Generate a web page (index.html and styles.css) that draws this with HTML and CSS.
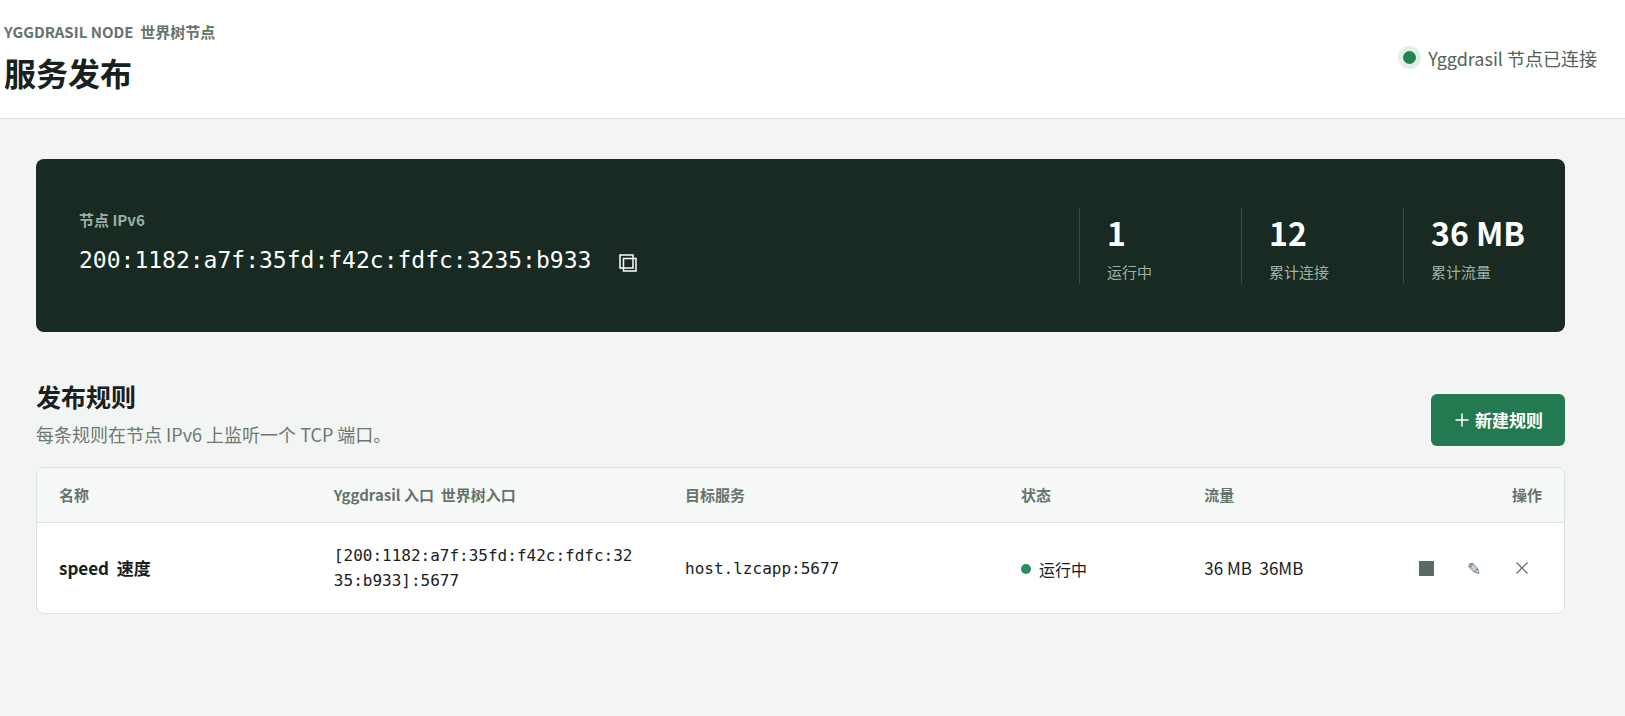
FILE: index.html
```html
<!DOCTYPE html>
<html lang="zh-CN">
<head>
    <meta charset="UTF-8">
    <meta name="viewport" content="width=device-width, initial-scale=1.0">
    <title>服务发布</title>
    <link rel="stylesheet" href="styles.css">
</head>
<body>
    <header class="topbar">
        <div>
            <p class="eyebrow">YGGDRASIL NODE&nbsp; 世界树节点</p>
            <h1>服务发布</h1>
        </div>
        <div class="node-status">
            <span class="status-dot"></span>
            <span>Yggdrasil 节点已连接</span>
        </div>
    </header>

    <main>
        <!-- Node address and totals -->
        <section class="node-band">
            <div class="node-info">
                <p class="node-label">节点 IPv6</p>
                <div class="address-row">
                    <code class="address">200:1182:a7f:35fd:f42c:fdfc:3235:b933</code>
                    <button type="button" class="copy-button" aria-label="复制地址">
                        <svg width="18" height="18" viewBox="0 0 18 18" fill="none" stroke="currentColor" stroke-width="1.5">
                            <path d="M1 1h13v13H1zM4.5 4.5h12.5v12.5H4.5z"/>
                        </svg>
                    </button>
                </div>
            </div>
            <div class="stats">
                <div class="stat"><strong>1</strong><span>运行中</span></div>
                <div class="stat"><strong>12</strong><span>累计连接</span></div>
                <div class="stat"><strong>36 MB</strong><span>累计流量</span></div>
            </div>
        </section>

        <!-- Rules -->
        <section>
            <div class="section-head">
                <div>
                    <h2>发布规则</h2>
                    <p class="hint">每条规则在节点 IPv6 上监听一个 TCP 端口。</p>
                </div>
                <button type="button" class="primary-button">
                    <svg width="14" height="14" viewBox="0 0 14 14" stroke="currentColor" stroke-width="1.5" aria-hidden="true">
                        <path d="M7 0.5v13M0.5 7h13"/>
                    </svg>
                    新建规则
                </button>
            </div>

            <div class="table-wrap">
                <table>
                    <thead>
                        <tr>
                            <th class="col-name">名称</th>
                            <th class="col-entry">Yggdrasil 入口&nbsp; 世界树入口</th>
                            <th class="col-target">目标服务</th>
                            <th class="col-state">状态</th>
                            <th class="col-traffic">流量</th>
                            <th class="col-actions">操作</th>
                        </tr>
                    </thead>
                    <tbody>
                        <tr>
                            <td class="rule-name">speed&nbsp; 速度</td>
                            <td><code>[200:1182:a7f:35fd:f42c:fdfc:3235:b933]:5677</code></td>
                            <td><code>host.lzcapp:5677</code></td>
                            <td><span class="state">运行中</span></td>
                            <td>36 MB&nbsp; 36MB</td>
                            <td>
                                <div class="actions">
                                    <button type="button" aria-label="停止">
                                        <svg width="15" height="15" viewBox="0 0 15 15" fill="currentColor"><path d="M0 0h15v15H0z"/></svg>
                                    </button>
                                    <button type="button" aria-label="编辑">✎</button>
                                    <button type="button" aria-label="删除">
                                        <svg width="12" height="12" viewBox="0 0 12 12" stroke="currentColor" stroke-width="1.2"><path d="M0.5 0.5l11 11M11.5 0.5l-11 11"/></svg>
                                    </button>
                                </div>
                            </td>
                        </tr>
                    </tbody>
                </table>
            </div>
        </section>
    </main>
</body>
</html>
```
FILE: styles.css
```css
* {
    box-sizing: border-box;
    margin: 0;
    padding: 0;
}
body {
    font-family: "Noto Sans CJK SC", sans-serif;
    font-size: 17px;
    line-height: 24px;
    color: #18211d;
    background-color: #f3f5f4;
}
button {
    font: inherit;
    border: none;
    cursor: pointer;
}
svg {
    display: block;
}
code {
    font-family: "DejaVu Sans Mono", monospace;
    font-size: 16px;
}
.topbar {
    display: flex;
    justify-content: space-between;
    align-items: center;
    padding: 20px 28px 23px 4px;
    background-color: #fff;
    border-bottom: 1px solid #dce2df;
}
.eyebrow {
    font-size: 15px;
    font-weight: 700;
    color: #66736c;
}
h1 {
    margin-top: 5px;
    font-size: 32px;
    line-height: 46px;
}
.node-status {
    display: flex;
    align-items: center;
    gap: 12px;
    font-size: 18px;
    color: #52625a;
}
.status-dot {
    width: 13px;
    height: 13px;
    border-radius: 50%;
    background-color: #23834f;
    box-shadow: 0 0 0 5px #dff0e6;
}
main {
    padding: 40px 60px 40px 36px;
}
.node-band {
    display: flex;
    justify-content: space-between;
    align-items: center;
    padding: 49px 0 48px 43px;
    color: #fff;
    background-color: #182a22;
    border-radius: 8px;
}
.node-info {
    padding-bottom: 8px;
}
.node-label {
    font-size: 15px;
    font-weight: 700;
    color: #9dafa5;
}
.address-row {
    display: flex;
    align-items: center;
    gap: 28px;
    margin-top: 12px;
}
.address {
    font-size: 23px;
    line-height: 32px;
}
.copy-button {
    padding-top: 6px;
    color: #fff;
    background: none;
}
.stats {
    display: flex;
}
.stat {
    width: 162px;
    padding: 4px 0 0 27px;
    border-left: 1px solid #3b4b44;
}
.stat strong, .stat span {
    display: block;
}
.stat strong {
    font-size: 32px;
    line-height: 40px;
}
.stat span {
    margin-top: 8px;
    font-size: 15px;
    color: #9dafa5;
}
.section-head {
    display: flex;
    justify-content: space-between;
    align-items: flex-end;
    margin: 46px 0 21px;
}
h2 {
    font-size: 25px;
    line-height: 36px;
}
.hint {
    margin-top: 8px;
    font-size: 18px;
    color: #6b7971;
}
.primary-button {
    display: flex;
    align-items: center;
    gap: 6px;
    padding: 14px 22px 14px 24px;
    font-weight: 700;
    color: #fff;
    background-color: #247a50;
    border-radius: 6px;
}
.table-wrap {
    overflow: hidden;
    background-color: #fff;
    border: 1px solid #dce2df;
    border-radius: 8px;
}
table {
    width: 100%;
    table-layout: fixed;
    border-collapse: collapse;
}
th, td {
    padding: 15px 22px;
    text-align: left;
}
th {
    font-size: 15px;
    color: #66736c;
    background-color: #f7f9f8;
    border-bottom: 1px solid #dce2df;
}
td {
    padding: 20px 22px;
}
td code {
    display: block;
    line-height: 25px;
    overflow-wrap: anywhere;
}
.col-name {
    width: 18%;
}
.col-entry {
    width: 23%;
}
.col-target {
    width: 22%;
}
.col-state {
    width: 12%;
}
.col-traffic {
    width: 13%;
}
.col-actions {
    width: 12%;
    text-align: right;
}
.rule-name {
    font-weight: 700;
}
.state {
    display: flex;
    align-items: center;
    gap: 8px;
    padding-top: 2px;
    font-size: 16px;
}
.state::before {
    content: "";
    width: 10px;
    height: 10px;
    border-radius: 50%;
    background-color: #26915c;
}
.actions {
    display: flex;
    justify-content: flex-end;
    gap: 8px;
}
.actions button {
    display: flex;
    flex: none;
    justify-content: center;
    align-items: center;
    width: 40px;
    height: 40px;
    color: #5b6a62;
    background: none;
}
```
